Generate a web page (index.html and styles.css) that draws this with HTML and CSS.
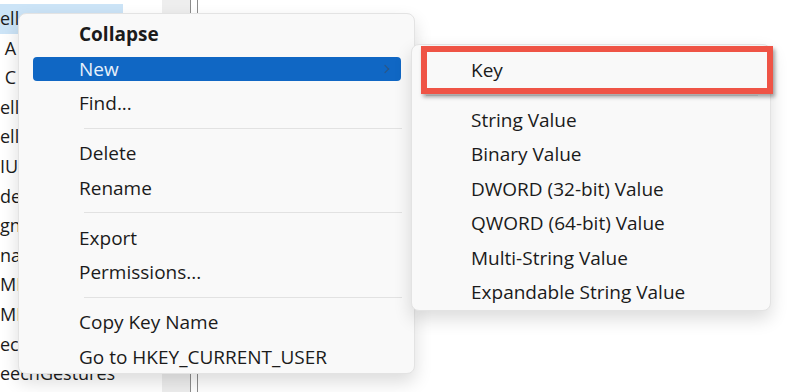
FILE: index.html
```html
<!DOCTYPE html>
<html lang="en">
<head>
  <meta charset="UTF-8">
  <title>Registry Editor - New menu</title>
  <link rel="stylesheet" href="styles.css">
</head>
<body>

  <div class="editor">
    <ul class="tree">
      <li class="row selected">ell</li>
      <li class="row">&nbsp;A</li>
      <li class="row">&nbsp;C</li>
      <li class="row">ell</li>
      <li class="row">ell</li>
      <li class="row">IU</li>
      <li class="row">de</li>
      <li class="row">gn</li>
      <li class="row">na</li>
      <li class="row">MD</li>
      <li class="row">MI</li>
      <li class="row">ec</li>
      <li class="row">eechGestures</li>
    </ul>
    <div class="gutter"></div>
    <div class="split"></div>
    <div class="values"></div>
  </div>

  <!-- context menu -->
  <div class="menu main-menu">
    <div class="item bold">Collapse</div>
    <div class="item active">New <span class="chevron"></span></div>
    <div class="item">Find...</div>
    <div class="sep"></div>
    <div class="item">Delete</div>
    <div class="item">Rename</div>
    <div class="sep"></div>
    <div class="item">Export</div>
    <div class="item">Permissions...</div>
    <div class="sep"></div>
    <div class="item">Copy Key Name</div>
    <div class="item">Go to HKEY_CURRENT_USER</div>
  </div>

  <!-- submenu of New -->
  <div class="menu sub-menu">
    <div class="item">Key</div>
    <div class="sep"></div>
    <div class="item">String Value</div>
    <div class="item">Binary Value</div>
    <div class="item">DWORD (32-bit) Value</div>
    <div class="item">QWORD (64-bit) Value</div>
    <div class="item">Multi-String Value</div>
    <div class="item">Expandable String Value</div>
    <div class="mark"></div>
  </div>

</body>
</html>
```

FILE: styles.css
```css
* {
  margin: 0;
  padding: 0;
  box-sizing: border-box;
}
body {
  width: 800px;
  height: 392px;
  overflow: hidden;
  background: #fff;
  font-family: 'Open Sans', 'Noto Sans', sans-serif;
  color: #1b1b1b;
  position: relative;
}

/* registry tree behind the menu */
.editor {
  display: flex;
  height: 392px;
}
.tree {
  width: 162px;
  list-style: none;
  padding-top: 4px;
  font-size: 18px;
}
.row {
  height: 29.6px;
  line-height: 29.6px;
  white-space: nowrap;
}
.selected {
  width: 123px;
  background: #cce4f7;
}
.gutter {
  width: 28px;
  background: #eeeeee;
}
.split {
  width: 8px;
  border-left: 1px solid #8c8c8c;
  border-right: 1px solid #8c8c8c;
}
.values {
  flex: 1;
}

/* menus */
.menu {
  position: absolute;
  display: flex;
  flex-direction: column;
  background: #f9f9f9;
  border: 1px solid #e3e3e3;
  border-radius: 8px;
  box-shadow: 0 8px 18px rgba(0, 0, 0, 0.14);
  font-size: 19px;
}
.main-menu {
  left: 18px;
  top: 13px;
  width: 397px;
  height: 361px;
  padding-top: 3px;
}
.sub-menu {
  left: 411px;
  top: 44px;
  width: 360px;
  height: 267px;
  padding-top: 8px;
}
.item {
  display: flex;
  align-items: center;
  flex-shrink: 0;
  height: 24px;
  margin: 5.25px 13px 5.25px 14px;
  padding-left: 46px;
  border-radius: 4px;
  white-space: nowrap;
}
.sub-menu .item {
  padding-left: 45px;
}
.bold {
  font-weight: 700;
}
.active {
  background: #1067c4;
  color: #e6f0fb;
}
.chevron {
  margin-left: auto;
  margin-right: 13px;
  width: 6px;
  height: 6px;
  border-top: 1.5px solid #2e557f;
  border-right: 1.5px solid #2e557f;
  transform: rotate(45deg);
}
.sep {
  flex-shrink: 0;
  height: 15.5px;
  display: flex;
  align-items: center;
  padding: 0 12px 0 65px;
}
.sep::after {
  content: "";
  flex: 1;
  height: 1px;
  background: #e2e2e2;
}
.sub-menu .sep {
  height: 15px;
  padding-left: 14px;
}

/* red highlight drawn over the Key item */
.mark {
  position: absolute;
  left: 9px;
  top: 1px;
  width: 352px;
  height: 48px;
  border: 6px solid #ef5446;
  box-shadow: 2px 3px 4px rgba(0, 0, 0, 0.35);
}
```
